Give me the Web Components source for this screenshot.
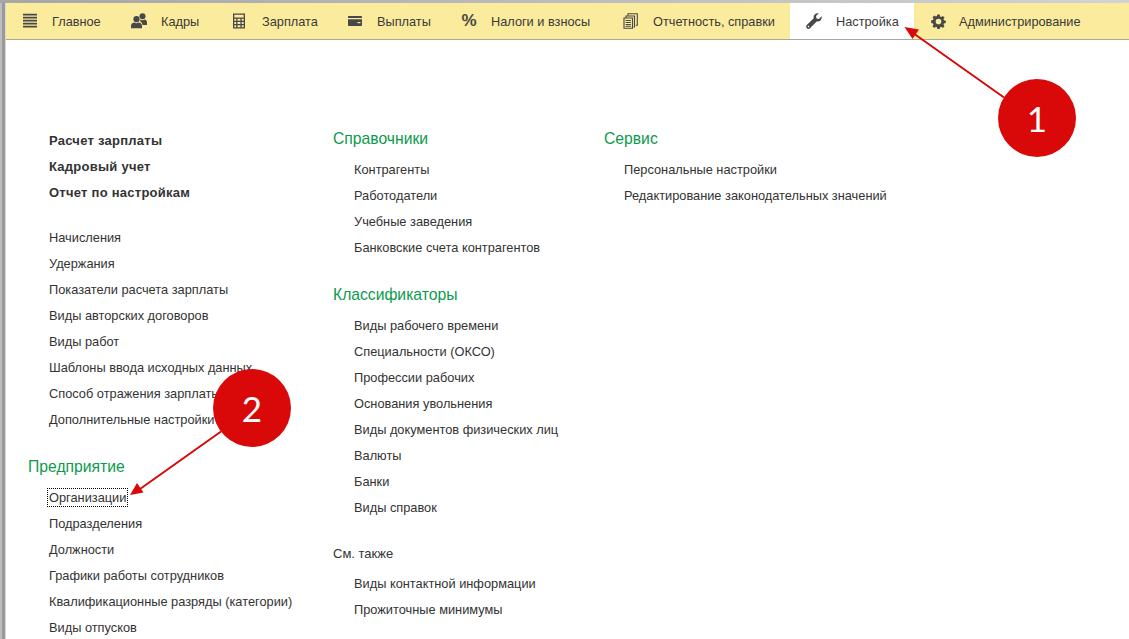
<!DOCTYPE html>
<html><head><meta charset="utf-8"><style>
html,body{margin:0;height:100%;overflow:hidden;background:#fff}
body{font-family:"Liberation Sans",Arial,sans-serif;font-size:13px;color:#333}
</style></head><body>
<app-window>
<nav-bar slot="nav">
<nav-tab label="Главное"><svg viewBox="0 0 16 16" width="16" height="16" fill="#484848"><path d="M1 .7h14v1.700H1zM1 3.800h14v1.700H1zM1 6.800h14v1.700H1zM1 9.800h14v1.700H1zM1 12.800h14v1.700H1z"/></svg></nav-tab>
<nav-tab label="Кадры"><svg viewBox="0 0 16 16" width="16" height="16" fill="#484848"><circle cx="11.500" cy="3.300" r="3"/><path d="M9.500 6.600c1.300.8 2.700.8 4 0 1.500.3 2.500 1.200 2.500 2.800v2.600h-4.500c-.2-1.800-1-3-2.600-3.700.5-.5.700-1.200.6-1.700z"/><circle cx="5.500" cy="6.200" r="3.100"/><path d="M0 13.200c0-2 1-3.200 3-3.600 1.600.8 3.400.8 5 0 2 .4 3 1.600 3 3.600v2.100H0z"/></svg></nav-tab>
<nav-tab label="Зарплата"><svg viewBox="0 0 16 16" width="16" height="16"><path fill="#484848" fill-rule="evenodd" d="M1 .5h12v15H1zM2.300 1.800v2.700h9.400V1.800zM2.300 5.800v2h1.900v-2zM5.500 5.800v2h2.900v-2zM9.700 5.800v2h2v-2zM2.300 9v2h1.900V9zM5.500 9v2h2.900V9zM9.700 9v2h2V9zM2.300 12.200v2h1.900v-2zM5.500 12.200v2h2.900v-2zM9.700 12.200v2h2v-2z"/></svg></nav-tab>
<nav-tab label="Выплаты"><svg viewBox="0 0 16 16" width="16" height="16"><path fill="#484848" d="M1.800 3h12.400c.5 0 .8.300.8.800v1.200H1V3.800c0-.5.300-.8.800-.8zM1 6.200h14v6c0 .5-.3.800-.8.800H1.800c-.5 0-.8-.3-.8-.8z"/><path fill="#fbeb9c" d="M10.500 9h3v1.200h-3z"/></svg></nav-tab>
<nav-tab label="Налоги и взносы"><pct-glyph>%</pct-glyph></nav-tab>
<nav-tab label="Отчетность, справки"><svg viewBox="0 0 16 16" width="16" height="16" fill="none" stroke="#484848" stroke-width="1.100"><path d="M5 2.800V.8h9.300v11.500h-1.500"/><path d="M3 5V3h8.500v11h-1"/><path d="M1 5h8.500v10.300H1zM2.600 7.500h5.300M2.600 9.500h5.300M2.600 11.500h5.300M2.600 13.300h5.300"/></svg></nav-tab>
<nav-tab label="Настройка" active><svg viewBox="0 0 16 16" width="16" height="16" fill="#484848"><path d="M15.600 3.300c.3 1.600 0 3-1.100 4.100-1 1-2.400 1.400-3.800 1L4 15.200c-.9.900-2.300.9-3.200 0-.9-.9-.9-2.300 0-3.200l6.900-6.700C7.300 3.800 7.700 2.400 8.700 1.500 9.800.4 11.200.1 12.700.4L10 3.100l.5 2.400 2.400.5z"/><circle cx="2.500" cy="13.600" r=".8" fill="#fff"/></svg></nav-tab>
<nav-tab label="Администрирование" style="gap:13px"><svg viewBox="0 0 16 16" width="15" height="15"><path fill="#484848" fill-rule="evenodd" d="M6.700 .6h2.600l.4 2c.4.100.8.300 1.200.5l1.700-1.100 1.800 1.800-1.100 1.700c.2.400.4.800.5 1.200l2 .4v2.600l-2 .4c-.1.400-.3.800-.5 1.200l1.100 1.700-1.800 1.800-1.700-1.100c-.4.200-.8.400-1.200.5l-.4 2H6.700l-.4-2c-.4-.1-.8-.3-1.200-.5l-1.700 1.100-1.800-1.800 1.100-1.700c-.2-.4-.4-.8-.5-1.200l-2-.4V6.700l2-.4c.1-.4.3-.8.500-1.200L1.600 3.400l1.800-1.800 1.700 1.100c.4-.2.800-.4 1.200-.5zM8 5a3 3 0 1 0 0 6 3 3 0 0 0 0-6z"/></svg></nav-tab>
</nav-bar>
<menu-column style="--x:22px;--w:305px;--top:87px">
<menu-group>
<menu-link bold>Расчет зарплаты</menu-link><menu-link bold>Кадровый учет</menu-link><menu-link bold>Отчет по настройкам</menu-link>
</menu-group>
<menu-group gap="19">
<menu-link>Начисления</menu-link><menu-link>Удержания</menu-link><menu-link>Показатели расчета зарплаты</menu-link><menu-link>Виды авторских договоров</menu-link><menu-link>Виды работ</menu-link><menu-link>Шаблоны ввода исходных данных</menu-link><menu-link>Способ отражения зарплаты</menu-link><menu-link>Дополнительные настройки</menu-link>
</menu-group>
<menu-group heading="Предприятие" gap="21">
<menu-link focused>Организации</menu-link><menu-link>Подразделения</menu-link><menu-link>Должности</menu-link><menu-link>Графики работы сотрудников</menu-link><menu-link>Квалификационные разряды (категории)</menu-link><menu-link>Виды отпусков</menu-link>
</menu-group>
</menu-column>
<menu-column style="--w:271px;--top:85px">
<menu-group heading="Справочники">
<menu-link>Контрагенты</menu-link><menu-link>Работодатели</menu-link><menu-link>Учебные заведения</menu-link><menu-link>Банковские счета контрагентов</menu-link>
</menu-group>
<menu-group heading="Классификаторы" gap="21">
<menu-link>Виды рабочего времени</menu-link><menu-link>Специальности (ОКСО)</menu-link><menu-link>Профессии рабочих</menu-link><menu-link>Основания увольнения</menu-link><menu-link>Виды документов физических лиц</menu-link><menu-link>Валюты</menu-link><menu-link>Банки</menu-link><menu-link>Виды справок</menu-link>
</menu-group>
<menu-group heading="См. также" minor gap="20">
<menu-link>Виды контактной информации</menu-link><menu-link>Прожиточные минимумы</menu-link>
</menu-group>
</menu-column>
<menu-column style="--w:500px;--top:85px;--pad:20px">
<menu-group heading="Сервис">
<menu-link>Персональные настройки</menu-link><menu-link>Редактирование законодательных значений</menu-link>
</menu-group>
</menu-column>
<arrow-layer></arrow-layer>
<step-badge style="--cx:1037px;--cy:118px">1</step-badge>
<step-badge style="--cx:252px;--cy:408px">2</step-badge>
</app-window>
<script>
function def(name,html,init){customElements.define(name,class extends HTMLElement{constructor(){super();this.attachShadow({mode:'open'}).innerHTML=html}connectedCallback(){init&&init(this)}})}
def('app-window',`<style>:host{display:grid;position:relative;width:1129px;height:639px;overflow:hidden;background:#fff;grid-template-columns:6px 1fr;grid-template-rows:3px 37px 1fr}
.top{grid-column:1/3;grid-row:1;background:linear-gradient(90deg,#a6a6a6,#d2d2d2)}
.left{grid-column:1;grid-row:2/4;background:linear-gradient(90deg,#bdbdbd 0,#bdbdbd 2px,#9a9a9a 2px,#9a9a9a 5px,#d8d8d8 5px)}
.nav{grid-column:2;grid-row:2}
.cols{grid-column:2;grid-row:3;display:flex;align-items:flex-start}
</style><div class="top"></div><div class="left"></div><div class="nav"><slot name="nav"></slot></div><div class="cols"><slot></slot></div>`);
def('nav-bar',`<style>:host{display:grid;grid-template-columns:109px 101px 115px 114px 162px 183px 124px 1fr;height:36px;background:#fbeb9c;border-bottom:1px solid #a9a9a0}</style><slot></slot>`);
def('nav-tab',`<style>:host{display:flex;align-items:center;gap:14px;padding:0 0 0 16px;color:#3a3a3a;font-size:12.75px}
:host([active]){background:#fff}
.i{width:16px;height:16px;display:flex;align-items:center;justify-content:center}svg,::slotted(svg){display:block}</style><span class="i"><slot></slot></span><span id="t"></span>`,e=>{e.shadowRoot.getElementById('t').textContent=e.getAttribute('label')});
def('pct-glyph',`<style>:host{display:block;font:bold 17px "Liberation Sans",Arial,sans-serif;color:#484848;line-height:16px}</style><slot></slot>`);
def('menu-column',`<style>:host{display:block;flex:none;box-sizing:border-box;width:var(--w);margin-left:var(--x,0);padding-top:var(--top)}</style><slot></slot>`);
def('menu-group',`<style>:host{display:block}
h3{margin:0 0 5px;padding-top:2px;font:400 15.7px/24px "Liberation Sans",Arial,sans-serif;color:#0b9a4c}
:host([minor]) h3{font-size:13px;color:#333;margin-bottom:4px}
.list{padding-left:var(--pad,21px)}
</style><h3 id="h"></h3><div class="list"><slot></slot></div>`,e=>{const h=e.shadowRoot.getElementById('h');const t=e.getAttribute('heading');if(t)h.textContent=t;else h.remove();e.style.marginTop=(e.getAttribute('gap')||0)+'px'});
def('menu-link',`<style>:host{display:block;height:26px;line-height:26px;white-space:nowrap;font-size:12.8px;color:#333}
:host([bold]){font-weight:700;font-size:13px;letter-spacing:.25px}
span{display:inline-block;line-height:17px;vertical-align:middle}
:host([focused]) span{outline:1px dotted #000;padding:0 1px;margin-left:-1px}</style><span><slot></slot></span>`);
def('step-badge',`<style>:host{position:absolute;left:calc(var(--cx) - 39px);top:calc(var(--cy) - 39px);width:78px;height:78px;border-radius:50%;background:#d90909;color:#fff;display:flex;align-items:center;justify-content:center;font:400 35px Lato,sans-serif}</style><slot></slot>`);
def('arrow-layer',`<style>:host{position:absolute;inset:0;pointer-events:none}svg{display:block}</style><svg width="1129" height="639" viewBox="0 0 1129 639"><g fill="#d90909" stroke="#d90909"><path fill="none" stroke-width="2" d="M1004 97.500L913 33M221 431.500L140 489"/><path stroke="none" d="M904.500 27l14.500 2.500-6.500 9.500zM130 495l7-12 6.500 9.500z"/></g></svg>`);
</script>
</body></html>
